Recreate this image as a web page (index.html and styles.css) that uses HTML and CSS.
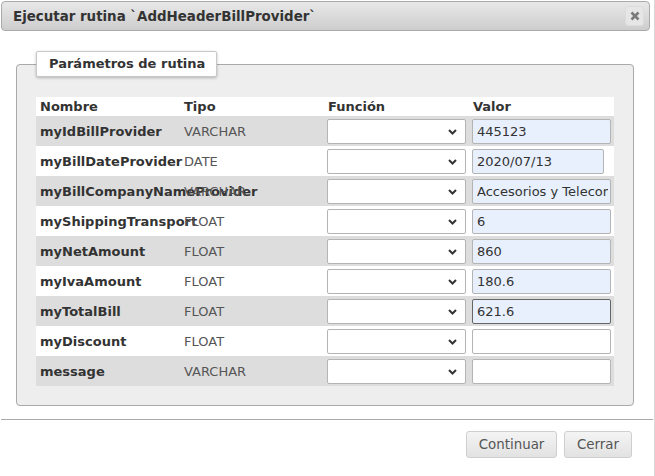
FILE: index.html
```html
<!DOCTYPE html>
<html>
<head>
<meta charset="utf-8">
<link rel="stylesheet" href="styles.css">
</head>
<body>
<div class="dialog">
  <div class="titlebar">
    <span class="title">Ejecutar rutina `AddHeaderBillProvider`</span>
    <button class="close" aria-label="Cerrar">
      <svg width="10" height="10" viewBox="0 0 10 10"><path d="M1.5 1.5 L8.5 8.5 M8.5 1.5 L1.5 8.5" stroke="#7a7a7a" stroke-width="2.6" stroke-linecap="butt"/></svg>
    </button>
  </div>
  <div class="content">
    <fieldset class="params">
      <legend class="legend">Parámetros de rutina</legend>
      <table class="grid">
        <colgroup><col class="c1"><col class="c2"><col class="c3"><col class="c4"></colgroup>
        <thead>
          <tr class="head"><th>Nombre</th><th>Tipo</th><th>Función</th><th>Valor</th></tr>
        </thead>
        <tbody>
          <tr class="odd"><td class="name">myIdBillProvider</td><td class="type">VARCHAR</td><td class="fn"><div class="sel"><select></select><svg class="chev" width="9" height="6" viewBox="0 0 9 6"><path d="M1 1 L4.5 4.5 L8 1" fill="none" stroke="#333" stroke-width="2"/></svg></div></td><td class="val"><input class="inp filled" value="445123"></td></tr>
          <tr class="even"><td class="name">myBillDateProvider</td><td class="type">DATE</td><td class="fn"><div class="sel"><select></select><svg class="chev" width="9" height="6" viewBox="0 0 9 6"><path d="M1 1 L4.5 4.5 L8 1" fill="none" stroke="#333" stroke-width="2"/></svg></div></td><td class="val"><input class="inp filled short" value="2020/07/13"></td></tr>
          <tr class="odd"><td class="name">myBillCompanyNameProvider</td><td class="type">VARCHAR</td><td class="fn"><div class="sel"><select></select><svg class="chev" width="9" height="6" viewBox="0 0 9 6"><path d="M1 1 L4.5 4.5 L8 1" fill="none" stroke="#333" stroke-width="2"/></svg></div></td><td class="val"><input class="inp filled" value="Accesorios y Telecomunicaciones"></td></tr>
          <tr class="even"><td class="name">myShippingTransport</td><td class="type">FLOAT</td><td class="fn"><div class="sel"><select></select><svg class="chev" width="9" height="6" viewBox="0 0 9 6"><path d="M1 1 L4.5 4.5 L8 1" fill="none" stroke="#333" stroke-width="2"/></svg></div></td><td class="val"><input class="inp filled" value="6"></td></tr>
          <tr class="odd"><td class="name">myNetAmount</td><td class="type">FLOAT</td><td class="fn"><div class="sel"><select></select><svg class="chev" width="9" height="6" viewBox="0 0 9 6"><path d="M1 1 L4.5 4.5 L8 1" fill="none" stroke="#333" stroke-width="2"/></svg></div></td><td class="val"><input class="inp filled" value="860"></td></tr>
          <tr class="even"><td class="name">myIvaAmount</td><td class="type">FLOAT</td><td class="fn"><div class="sel"><select></select><svg class="chev" width="9" height="6" viewBox="0 0 9 6"><path d="M1 1 L4.5 4.5 L8 1" fill="none" stroke="#333" stroke-width="2"/></svg></div></td><td class="val"><input class="inp filled" value="180.6"></td></tr>
          <tr class="odd"><td class="name">myTotalBill</td><td class="type">FLOAT</td><td class="fn"><div class="sel"><select></select><svg class="chev" width="9" height="6" viewBox="0 0 9 6"><path d="M1 1 L4.5 4.5 L8 1" fill="none" stroke="#333" stroke-width="2"/></svg></div></td><td class="val"><input class="inp filled focused" value="621.6"></td></tr>
          <tr class="even"><td class="name">myDiscount</td><td class="type">FLOAT</td><td class="fn"><div class="sel"><select></select><svg class="chev" width="9" height="6" viewBox="0 0 9 6"><path d="M1 1 L4.5 4.5 L8 1" fill="none" stroke="#333" stroke-width="2"/></svg></div></td><td class="val"><input class="inp" value=""></td></tr>
          <tr class="odd"><td class="name">message</td><td class="type">VARCHAR</td><td class="fn"><div class="sel"><select></select><svg class="chev" width="9" height="6" viewBox="0 0 9 6"><path d="M1 1 L4.5 4.5 L8 1" fill="none" stroke="#333" stroke-width="2"/></svg></div></td><td class="val"><input class="inp" value=""></td></tr>
        </tbody>
      </table>
    </fieldset>
  </div>
  <div class="buttonpane">
    <button class="btn btn-continue">Continuar</button>
    <button class="btn btn-close">Cerrar</button>
  </div>
</div>
</body>
</html>
```

FILE: styles.css
```css
* { box-sizing: border-box; }
html, body { margin: 0; padding: 0; background: #fff; }
body {
  font-family: "DejaVu Sans", Verdana, sans-serif;
  font-size: 13px;
  color: #333;
  width: 655px;
  height: 476px;
  overflow: hidden;
}
.dialog {
  width: 655px;
  padding: 1px 4px 0 1px;
  border-right: 1px solid #d8d8d8;
  height: 476px;
}
.titlebar {
  height: 30px;
  border: 1px solid #aaa;
  border-radius: 4px;
  background: linear-gradient(#e8e8e8, #cdcdcd);
  display: flex;
  align-items: center;
  justify-content: space-between;
  padding: 0 5px 0 11px;
}
.title {
  font-weight: bold;
  font-size: 13.4px;
  color: #333;
}
.close {
  width: 19px;
  height: 20px;
  margin: 0;
  padding: 0;
  border: 1px solid #dcdcdc;
  border-radius: 3px;
  background: #e6e6e6;
  display: flex;
  align-items: center;
  justify-content: center;
}
.content {
  padding: 20px 16px 13px 15px;
}
.params {
  margin: 0;
  border: 1px solid #aaa;
  border-radius: 4px;
  background: #eee;
  padding: 20px 19px 19px 19px;
  min-width: 0;
}
.legend {
  background: #fff;
  border: 1px solid #c8c8c8;
  border-radius: 2px;
  box-shadow: 0 1px 3px rgba(0,0,0,0.25);
  padding: 0 11px 0 12px;
  height: 26px;
  line-height: 24px;
  font-weight: bold;
  color: #333;
  margin-left: 0;
}
.grid {
  width: 578px;
  table-layout: fixed;
  border-collapse: collapse;
  border-spacing: 0;
}
.c1 { width: 144px; }
.c2 { width: 144px; }
.c3 { width: 145px; }
.c4 { width: 145px; }
.head { background: #fff; height: 19px; }
.head th {
  text-align: left;
  font-weight: bold;
  padding: 0 0 0 4px;
  height: 19px;
  line-height: 18px;
  color: #333;
}
.odd { background: #ddd; }
.even { background: #fff; }
tbody tr { height: 30px; }
td {
  padding: 0;
  white-space: nowrap;
  overflow: visible;
  vertical-align: middle;
}
.name {
  font-weight: bold;
  color: #333;
  padding-left: 4px;
}
.type {
  color: #555;
  padding-left: 4px;
}
.fn { padding-left: 3px; }
.val { padding-left: 3px; }
.sel {
  position: relative;
  width: 139px;
  height: 25px;
}
.sel select {
  appearance: none;
  -webkit-appearance: none;
  width: 139px;
  height: 25px;
  background: #fff;
  border: 1px solid #b4b4b4;
  border-radius: 2px;
  margin: 0;
  display: block;
}
.chev {
  position: absolute;
  right: 9px;
  top: 10px;
}
.inp {
  display: block;
  width: 139px;
  height: 25px;
  margin: 0;
  border: 1px solid #b4b4b4;
  border-radius: 2px;
  background: #fff;
  font-family: "DejaVu Sans", Verdana, sans-serif;
  font-size: 13px;
  color: #333;
  padding: 0 2px 0 4px;
  outline: none;
}
.inp.filled { background: #e8f0fe; }
.inp.short { width: 132px; }
.inp.focused { border-color: #666; }
.buttonpane {
  border-top: 1px solid #aaa;
  display: flex;
  justify-content: flex-end;
  gap: 7px;
  padding: 11px 21px 0 0;
  margin-right: -3px;
}
.btn {
  height: 27px;
  margin: 0;
  padding: 0;
  border: 1px solid #cfcfcf;
  border-radius: 3px;
  background: linear-gradient(#f4f4f4, #e2e2e2);
  font-family: "DejaVu Sans", Verdana, sans-serif;
  font-size: 13.4px;
  color: #555;
  text-align: center;
}
.btn-continue { width: 91px; }
.btn-close { width: 68px; }
```
